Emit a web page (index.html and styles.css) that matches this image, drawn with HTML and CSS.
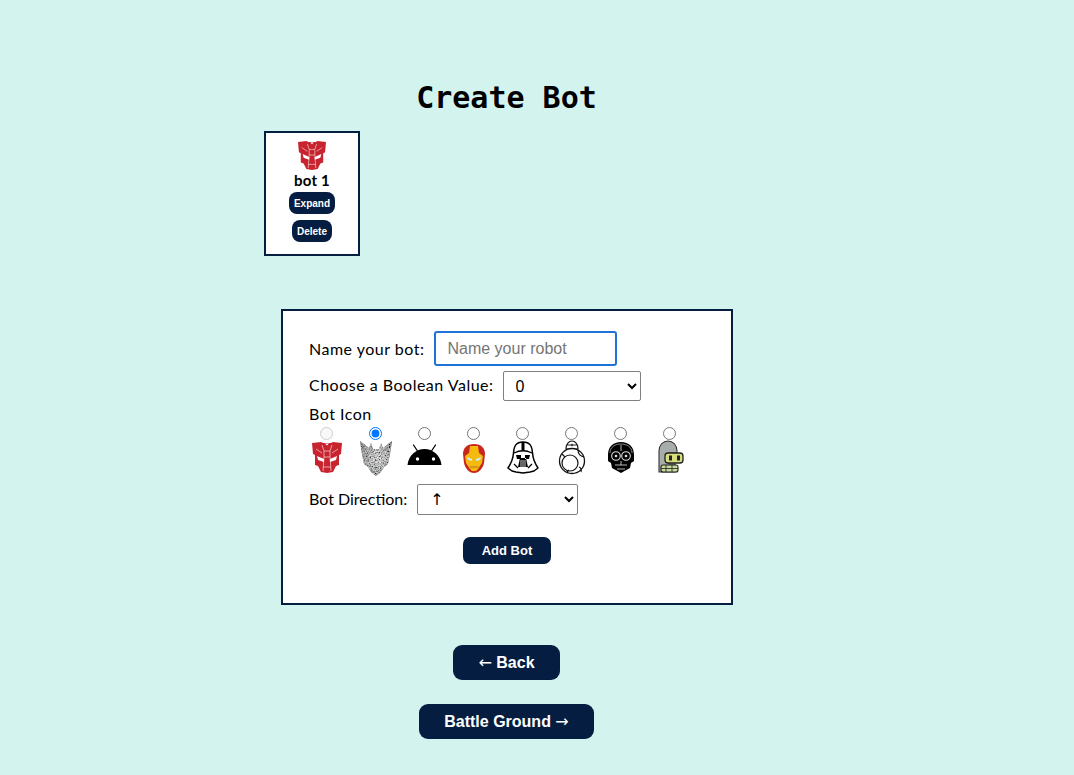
FILE: index.html
```html
<!DOCTYPE html>
<html lang="en">
<head>
    <meta charset="UTF-8">
    <meta name="viewport" content="width=device-width, initial-scale=1.0">
    <title>Create Bot</title>
    <link rel="stylesheet" href="styles.css">
</head>
<body>
    <svg class="defs" width="0" height="0">
        <defs>
            <symbol id="autobot" viewBox="0 0 30 31">
                <path fill="#c8242f" d="M0 1l9-1 2 1h8l2-1 9 1-1 11-2 1v10l-3 1-3 6-6 1-6-1-3-6-3-1V13l-2-1z"/>
                <path fill="none" stroke="#f3d6d6" stroke-width="0.700" d="M10 3l2 6h6l2-6M12 9v6h6V9M4 7l6 4M26 7l-6 4M12 15l-1 14M18 15l1 14M11 25h8"/>
                <path fill="#fff" d="M5 14l7 3v3l-6-2zM25 14l-7 3v3l6-2zM13 1.500h4l-2 2z"/>
            </symbol>
            <filter id="speckle" x="0" y="0" width="100%" height="100%">
                <feTurbulence type="fractalNoise" baseFrequency="0.8" numOctaves="2" result="noise"/>
                <feColorMatrix in="noise" type="saturate" values="0"/>
                <feComponentTransfer><feFuncR type="linear" slope="3" intercept="-1"/><feFuncG type="linear" slope="3" intercept="-1"/><feFuncB type="linear" slope="3" intercept="-1"/><feFuncA type="linear" slope="0" intercept="1"/></feComponentTransfer>
                <feComposite in2="SourceGraphic" operator="in"/>
            </filter>
            <radialGradient id="decepShade" cx="0.55" cy="0.5" r="0.6">
                <stop offset="0" stop-color="#e6e6e6"/>
                <stop offset="1" stop-color="#44474a"/>
            </radialGradient>
        </defs>
    </svg>

    <main class="page">
        <h1 class="title">Create Bot</h1>

        <div class="bot-list">
            <div class="bot-card">
                <svg class="bot-card-icon"><use href="#autobot"/></svg>
                <div class="bot-name">bot 1</div>
                <button class="btn btn-small">Expand</button>
                <button class="btn btn-small">Delete</button>
            </div>
        </div>

        <form class="bot-form">
            <div class="row row-name">
                <label for="botName">Name your bot:</label>
                <input type="text" id="botName" class="name-input" placeholder="Name your robot">
            </div>
            <div class="row row-bool">
                <label for="botBool">Choose a Boolean Value:</label>
                <select id="botBool" class="bool-select">
                    <option>0</option>
                    <option>1</option>
                </select>
            </div>
            <div class="icon-title">Bot Icon</div>
            <div class="icon-grid">
                <label class="icon-option">
                    <input type="radio" name="icon" disabled>
                    <svg class="bot-icon bot-icon-autobot"><use href="#autobot"/></svg>
                </label>
                <label class="icon-option">
                    <input type="radio" name="icon" checked>
                    <svg class="bot-icon bot-icon-decepticon" viewBox="0 0 36 36">
                        <path fill="url(#decepShade)" d="M2 1l9 7 2-5 2 6h6l2-6 2 5 9-7-2 13-2 10-4 3-3 5-5 4-5-4-3-5-4-3-2-10z"/>
                        <path filter="url(#speckle)" opacity="0.6" d="M2 1l9 7 2-5 2 6h6l2-6 2 5 9-7-2 13-2 10-4 3-3 5-5 4-5-4-3-5-4-3-2-10z"/>
                    </svg>
                </label>
                <label class="icon-option">
                    <input type="radio" name="icon">
                    <svg class="bot-icon" viewBox="0.5 0 36 35">
                        <path fill="none" stroke="#000" stroke-width="1.300" stroke-linecap="round" d="M7 5l4 6M29 5l-4 6"/>
                        <path fill="#000" d="M1 25C2 15 10 9 18 9s16 6 17 16z"/>
                        <circle cx="11" cy="19" r="1.700" fill="#fff"/>
                        <circle cx="27" cy="19" r="1.700" fill="#fff"/>
                    </svg>
                </label>
                <label class="icon-option">
                    <input type="radio" name="icon">
                    <svg class="bot-icon" viewBox="0 0 36 35">
                        <path fill="#c8261e" d="M18 4c7 0 11 4 11 10l-1 9c-1 5-5 10-10 10s-9-5-10-10l-1-9C7 8 11 4 18 4z"/>
                        <path fill="#f5b90f" d="M14 6h8l1 7 4 3-1 7-4 6-2 2h-4l-2-2-4-6-1-7 4-3z"/>
                        <path fill="#c9eef2" d="M11 17l5 2v2l-4-1zM25 17l-5 2v2l4-1z"/>
                        <path fill="none" stroke="#a4621a" stroke-width="0.800" d="M14 27h8"/>
                    </svg>
                </label>
                <label class="icon-option">
                    <input type="radio" name="icon">
                    <svg class="bot-icon" viewBox="0 0 36 35">
                        <path fill="#fff" stroke="#000" stroke-width="1.500" stroke-linejoin="round" d="M18 2C11 2 9 6 8.500 13 8 20 5 25 3 28l4 3 4 1 7 1 7-1 4-1 4-3c-2-3-5-8-5.500-15C27 6 25 2 18 2z"/>
                        <path fill="none" stroke="#000" stroke-width="1.300" d="M9 13c6-3 12-3 18 0M9 24l4 4M27 24l-4 4"/>
                        <path fill="#000" d="M16.500 2h3v9h-3zM11 15h5v4h-4zM25 15h-5v4h4zM15 18h6l2 9H13z"/>
                        <path stroke="#fff" stroke-width="0.800" d="M16 20v7M18 20v7M20 20v7"/>
                    </svg>
                </label>
                <label class="icon-option">
                    <input type="radio" name="icon">
                    <svg class="bot-icon" viewBox="0 0 36 35">
                        <path fill="#fff" stroke="#111" stroke-width="1.100" d="M12 9c0-5 3-8 6-8s6 3 6 8z"/>
                        <path fill="none" stroke="#111" stroke-width="0.900" d="M12.500 5h11"/>
                        <circle cx="18" cy="5" r="1.300" fill="#444"/>
                        <circle cx="18" cy="21" r="12.500" fill="#fff" stroke="#111" stroke-width="1.300"/>
                        <circle cx="16" cy="23" r="8" fill="#fff" stroke="#111" stroke-width="1.200"/>
                        <path fill="none" stroke="#111" stroke-width="1.100" d="M24 10c0 4 2 6 6 7M25 27c2 1 3 2 2 5M8 14l3 3M13 32l2-2"/>
                    </svg>
                </label>
                <label class="icon-option">
                    <input type="radio" name="icon">
                    <svg class="bot-icon" viewBox="0 0 36 35">
                        <path fill="#000" d="M18 2c8 0 13 5 13 13v6l-3 2-1 5-9 5-9-5-1-5-3-2v-6C5 7 10 2 18 2z"/>
                        <path fill="none" stroke="#bbb" stroke-width="0.700" d="M7 13c0-6 5-9 11-9s11 3 11 9"/>
                        <circle cx="13" cy="16" r="4.300" fill="none" stroke="#ddd" stroke-width="1.100"/>
                        <circle cx="23" cy="16" r="4.300" fill="none" stroke="#ddd" stroke-width="1.100"/>
                        <circle cx="13" cy="16" r="1.300" fill="#ddd"/>
                        <circle cx="23" cy="16" r="1.300" fill="#ddd"/>
                        <path fill="none" stroke="#ccc" stroke-width="0.900" d="M18 5v6M12 25h12M14 29h8M18 21v4"/>
                    </svg>
                </label>
                <label class="icon-option">
                    <input type="radio" name="icon">
                    <svg class="bot-icon" viewBox="1 0 36 35">
                        <path fill="#a7adab" stroke="#333" stroke-width="1.100" d="M8 32V11C8 5 12 1 17 1s9 4 9 10v2h-8v11h6v8z"/>
                        <rect x="14" y="13" width="18" height="10" rx="3" fill="#d6dd7c" stroke="#222" stroke-width="1.300"/>
                        <rect x="18" y="15.500" width="3" height="5" fill="#222"/>
                        <rect x="26" y="15.500" width="3" height="5" fill="#222"/>
                        <rect x="10" y="25" width="17" height="7" rx="2" fill="#c6d89a" stroke="#222" stroke-width="1.100"/>
                        <path fill="none" stroke="#222" stroke-width="0.800" d="M10 28.500h17M15 25v7M21 25v7"/>
                    </svg>
                </label>
            </div>
            <div class="row row-direction">
                <label for="botDir">Bot Direction:</label>
                <select id="botDir" class="dir-select">
                    <option>↑</option>
                    <option>↓</option>
                    <option>←</option>
                    <option>→</option>
                </select>
            </div>
            <div class="form-actions">
                <button type="button" class="btn btn-add">Add Bot</button>
            </div>
        </form>

        <div class="nav-buttons">
            <button class="btn btn-nav"><span class="arrow">←</span> Back</button>
            <button class="btn btn-nav btn-battle">Battle Ground <span class="arrow">→</span></button>
        </div>
    </main>
</body>
</html>
```

FILE: styles.css
```css
body {
    margin: 0;
    background-color: #d3f3ee;
    font-family: "Liberation Sans", Arial, sans-serif;
    color: #000;
}
.defs {
    display: block;
    height: 0;
}
.page {
    width: 485px;
    margin-left: 264px;
    padding-top: 80px;
}
.title {
    margin: 0;
    height: 51px;
    line-height: 36px;
    text-align: center;
    font-family: "DejaVu Sans Mono", monospace;
    font-size: 30px;
    font-weight: bold;
}
.bot-card {
    box-sizing: border-box;
    width: 96px;
    height: 125px;
    background-color: #fff;
    border: 2px solid #051d40;
    padding-top: 8px;
    display: flex;
    flex-direction: column;
    align-items: center;
}
.bot-card-icon {
    width: 28px;
    height: 29px;
}
.bot-name {
    font-family: "Lato", sans-serif;
    font-size: 15px;
    font-weight: bold;
    letter-spacing: 0.2px;
    line-height: 18px;
    margin: 1px 0 1px;
}
.btn {
    border: none;
    background-color: #051d40;
    color: #fff;
    font-family: "Liberation Sans", Arial, sans-serif;
    font-weight: bold;
    padding: 0;
    cursor: pointer;
}
.btn-small {
    height: 22px;
    padding: 0 5px;
    margin-top: 2px;
    margin-bottom: 4px;
    border-radius: 8px;
    font-size: 10px;
}
.bot-form {
    box-sizing: border-box;
    width: 452px;
    height: 296px;
    margin: 53px 0 0 17px;
    padding: 20px 26px;
    background-color: #fff;
    border: 2px solid #051d40;
    font-family: "Lato", sans-serif;
    font-size: 16px;
}
.row {
    display: flex;
    align-items: center;
    gap: 9px;
}
.row label,
.icon-title {
    letter-spacing: 0.5px;
}
.row-name {
    gap: 10px;
}
.row-bool {
    margin-top: 5px;
}
.row-bool label {
    padding-bottom: 3px;
}
.name-input {
    box-sizing: border-box;
    width: 183px;
    height: 35px;
    padding: 0 11px;
    border: 2px solid #1f73d6;
    border-radius: 3px;
    outline: none;
    font-family: "Liberation Sans", Arial, sans-serif;
    font-size: 16px;
}
.name-input::placeholder {
    color: #757575;
}
.bool-select,
.dir-select {
    box-sizing: border-box;
    background-color: #fff;
    border: 1px solid #808080;
    border-radius: 2px;
    padding-left: 8px;
    font-family: "Liberation Sans", Arial, sans-serif;
    font-size: 16px;
    color: #000;
}
.bool-select {
    width: 138px;
    height: 30px;
}
.dir-select {
    width: 161px;
    height: 31px;
    font-family: "DejaVu Sans", sans-serif;
}
.icon-title {
    margin-top: 3px;
    line-height: 19px;
}
.icon-grid {
    display: grid;
    grid-template-columns: repeat(8, 33px);
    column-gap: 16px;
    margin: 4px 0 0 1px;
}
.icon-option {
    display: flex;
    flex-direction: column;
    align-items: center;
    height: 50px;
}
.icon-option input {
    width: 13px;
    height: 13px;
    margin: 0;
}
.bot-icon {
    width: 36px;
    height: 35px;
    flex: none;
    margin: 0 -2px;
}
.bot-icon-autobot {
    width: 30px;
    height: 31px;
    margin: 2px 0;
}
.bot-icon-decepticon {
    height: 36px;
}
.row-direction {
    margin-top: 7px;
    gap: 10px;
}
.row-direction label {
    letter-spacing: 0;
    padding-bottom: 2px;
}
.form-actions {
    display: flex;
    justify-content: center;
    margin-top: 22px;
}
.btn-add {
    width: 88px;
    height: 27px;
    border-radius: 7px;
    font-size: 13px;
}
.nav-buttons {
    display: flex;
    flex-direction: column;
    align-items: center;
    gap: 24px;
    margin-top: 40px;
}
.btn-nav {
    width: 107px;
    height: 35px;
    border-radius: 9px;
    font-size: 16px;
}
.btn-battle {
    width: 175px;
}
.arrow {
    font-family: "DejaVu Sans", sans-serif;
    font-weight: normal;
}
```
